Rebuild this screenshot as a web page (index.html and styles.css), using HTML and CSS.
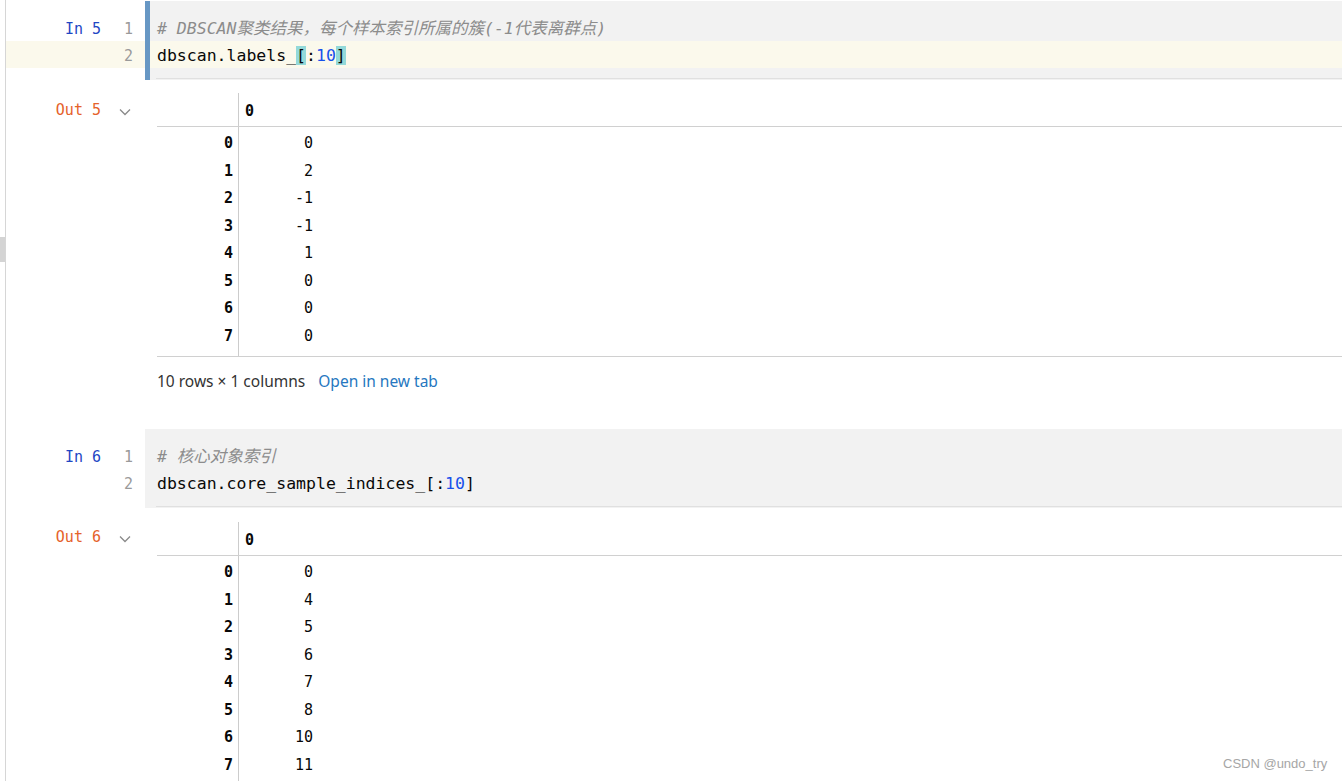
FILE: index.html
```html
<!DOCTYPE html>
<html>
<head>
<meta charset="utf-8">
<link rel="stylesheet" href="styles.css">
</head>
<body>
<div class="nb">
  <div class="cell selected">
    <div class="line pad-top"><div class="gut"></div><div class="code"></div></div>
    <div class="line">
      <div class="gut"><span class="prompt in-p">In 5</span><span class="lnum">1</span></div>
      <div class="code"><span class="cmt"># DBSCAN聚类结果，每个样本索引所属的簇(-1代表离群点)</span></div>
    </div>
    <div class="line cur">
      <div class="gut"><span class="prompt"></span><span class="lnum">2</span></div>
      <div class="code">dbscan.labels_<span class="bm">[</span>:<span class="num">10</span><span class="bm">]</span></div>
    </div>
    <div class="line pad-bot"><div class="gut"></div><div class="code"><div class="code-rule"></div></div></div>
  </div>

  <div class="out">
    <div class="out-gut"><span class="prompt out-p">Out 5</span>
      <svg class="chev" width="12" height="8" viewBox="0 0 12 8"><path d="M1 1.5 L6 6.5 L11 1.5" fill="none" stroke="#8a8a8a" stroke-width="1.3"/></svg>
    </div>
    <div class="df-wrap">
      <div class="df">
        <div class="df-head"><div class="ix"></div><div class="v hv">0</div></div>
        <div class="df-body">
          <div class="r"><div class="ix">0</div><div class="v">0</div></div>
          <div class="r"><div class="ix">1</div><div class="v">2</div></div>
          <div class="r"><div class="ix">2</div><div class="v">-1</div></div>
          <div class="r"><div class="ix">3</div><div class="v">-1</div></div>
          <div class="r"><div class="ix">4</div><div class="v">1</div></div>
          <div class="r"><div class="ix">5</div><div class="v">0</div></div>
          <div class="r"><div class="ix">6</div><div class="v">0</div></div>
          <div class="r"><div class="ix">7</div><div class="v">0</div></div>
        </div>
      </div>
      <div class="df-foot"><span>10 rows × 1 columns</span><a class="open">Open in new tab</a></div>
    </div>
  </div>

  <div class="cell second">
    <div class="line pad-top"><div class="gut"></div><div class="code"></div></div>
    <div class="line">
      <div class="gut"><span class="prompt in-p">In 6</span><span class="lnum">1</span></div>
      <div class="code"><span class="cmt"># 核心对象索引</span></div>
    </div>
    <div class="line">
      <div class="gut"><span class="prompt"></span><span class="lnum">2</span></div>
      <div class="code">dbscan.core_sample_indices_[:<span class="num">10</span>]</div>
    </div>
    <div class="line pad-bot"><div class="gut"></div><div class="code"><div class="code-rule"></div></div></div>
  </div>

  <div class="out out2">
    <div class="out-gut"><span class="prompt out-p">Out 6</span>
      <svg class="chev" width="12" height="8" viewBox="0 0 12 8"><path d="M1 1.5 L6 6.5 L11 1.5" fill="none" stroke="#8a8a8a" stroke-width="1.3"/></svg>
    </div>
    <div class="df-wrap">
      <div class="df">
        <div class="df-head"><div class="ix"></div><div class="v hv">0</div></div>
        <div class="df-body">
          <div class="r"><div class="ix">0</div><div class="v">0</div></div>
          <div class="r"><div class="ix">1</div><div class="v">4</div></div>
          <div class="r"><div class="ix">2</div><div class="v">5</div></div>
          <div class="r"><div class="ix">3</div><div class="v">6</div></div>
          <div class="r"><div class="ix">4</div><div class="v">7</div></div>
          <div class="r"><div class="ix">5</div><div class="v">8</div></div>
          <div class="r"><div class="ix">6</div><div class="v">10</div></div>
          <div class="r"><div class="ix">7</div><div class="v">11</div></div>
        </div>
      </div>
    </div>
  </div>
</div>
<div class="scroll-mark"></div>
<div class="watermark">CSDN @undo_try</div>
</body>
</html>
```
FILE: styles.css
```css
html, body {
  margin: 0;
  padding: 0;
  background: #ffffff;
  overflow: hidden;
  height: 781px;
}
body {
  position: relative;
  font-family: "DejaVu Sans Mono", "Noto Sans CJK SC", monospace;
  color: #080808;
}
.nb {
  margin-left: 5px;
  border-left: 1px solid #d6d6d6;
  min-height: 781px;
  padding-top: 1px;
}
.line {
  display: flex;
  height: 27px;
}
.line.pad-top { height: 13px; }
.line.pad-bot { height: 12px; }
.gut {
  width: 139px;
  flex: none;
  display: flex;
  align-items: center;
  box-sizing: border-box;
  padding-top: 2px;
}
.prompt {
  width: 95px;
  text-align: right;
  font-size: 15px;
}
.in-p { color: #1f47c4; }
.out-p { color: #e5622b; }
.lnum {
  width: 32px;
  text-align: right;
  font-size: 15px;
  color: #9a9a9a;
}
.code {
  flex: 1;
  background: #f2f2f2;
  border-left: 5px solid #f2f2f2;
  padding-left: 7px;
  padding-top: 2px;
  font-size: 16.5px;
  line-height: 25px;
  white-space: pre;
}
.pad-top .code, .pad-bot .code { padding-top: 0; }
.selected .code { border-left-color: #6797c4; }
.line.cur { background: #fbf9ec; }
.line.cur .code { background: #fbf9ec; }
.cmt { color: #8c8c8c; font-style: italic; }
.num { color: #1750eb; }
.bm { background: #93d9d9; }
.code-rule {
  margin-top: 10px;
  margin-left: -1px;
  border-top: 1px solid #e0e0e0;
}

.out {
  display: flex;
  margin-top: 13px;
}
.out-gut {
  width: 139px;
  flex: none;
  display: flex;
  align-items: center;
  height: 30px;
  padding-top: 2px;
}
.chev { margin-left: 18px; margin-top: 4px; }
.df-wrap {
  flex: 1;
  margin-left: 12px;
}
.df {
  background: linear-gradient(#cccccc, #cccccc) 81px 0 / 1px 100% no-repeat;
  font-size: 15px;
}
.df-head {
  display: flex;
  height: 34px;
  align-items: center;
  box-sizing: border-box;
  padding-top: 2px;
  border-bottom: 1px solid #d0d0d0;
}
.df-body {
  padding-top: 2.25px;
  padding-bottom: 7px;
  border-bottom: 1px solid #d0d0d0;
}
.r {
  display: flex;
  height: 27.5px;
  align-items: center;
}
.ix {
  width: 76px;
  padding-right: 6px;
  text-align: right;
  font-weight: bold;
  flex: none;
}
.v {
  width: 74px;
  padding-right: 6px;
  text-align: right;
}
.hv {
  text-align: left;
  padding-left: 6px;
  font-weight: bold;
}
.df-foot {
  padding-top: 14px;
  line-height: 20px;
  font-family: "Noto Sans", "Liberation Sans", sans-serif;
  font-size: 15.5px;
  color: #333333;
  padding-bottom: 38px;
}
.open { color: #2677c0; margin-left: 13px; }

.out2 { margin-top: 14px; }
.out2 .out-gut { padding-top: 0; }

.scroll-mark {
  position: absolute;
  left: 0;
  top: 237px;
  width: 5px;
  height: 25px;
  background: #d4d4d4;
}
.watermark {
  position: absolute;
  left: 1223px;
  top: 756px;
  font-family: "Liberation Sans", sans-serif;
  font-size: 13px;
  color: #a6a6a6;
  background: rgba(255,255,255,0.6);
}
```
